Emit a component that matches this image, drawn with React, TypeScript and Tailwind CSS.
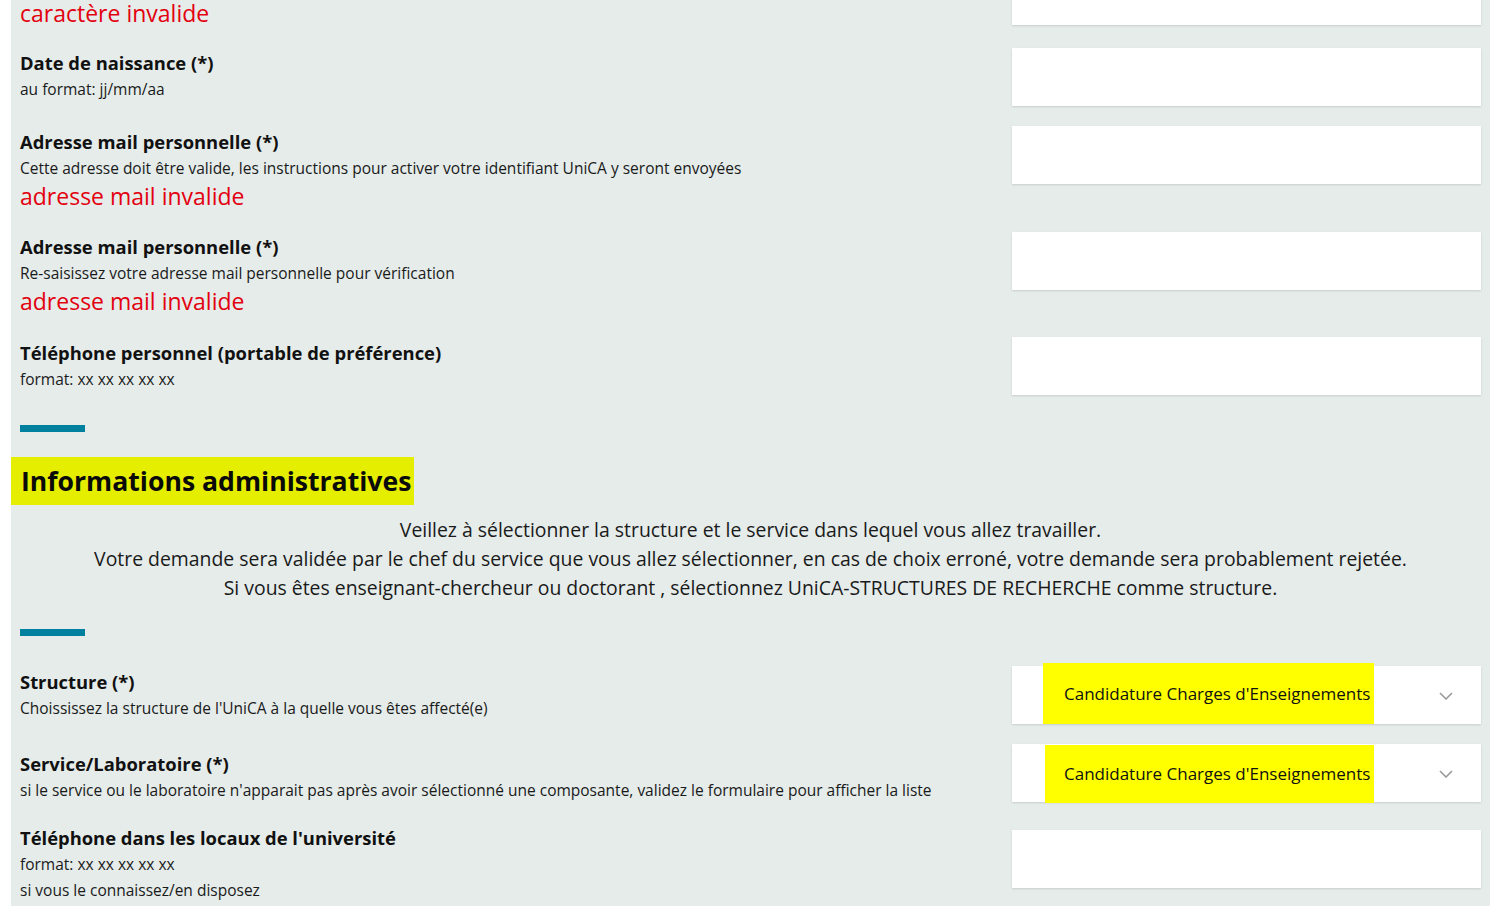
import { ReactNode } from "react";

const font = { fontFamily: "'Open Sans', 'Noto Sans', sans-serif" };

function Chevron() {
  return (
    <svg width="14" height="8" viewBox="0 0 14 8" fill="none">
      <polyline points="1,1 7,7 13,1" stroke="#9a9a9a" strokeWidth="1.6" />
    </svg>
  );
}

function Input({ className = "" }: { className?: string }) {
  return <div className={`h-[58px] w-[469px] shrink-0 bg-white shadow-[0_1px_2px_rgba(0,0,0,0.13)] ${className}`} />;
}

function Select({ value, className = "", hl = "" }: { value: string; className?: string; hl?: string }) {
  return (
    <div className={`relative flex h-[58px] w-[469px] shrink-0 items-center bg-white shadow-[0_1px_2px_rgba(0,0,0,0.13)] ${className}`}>
      <div className={`absolute left-[31px] flex w-[331px] items-center bg-[#ffff00] pl-[21px] text-[17px] text-[#111] ${hl}`}>
        {value}
      </div>
      <div className="absolute right-[28px] top-[26px]">
        <Chevron />
      </div>
    </div>
  );
}

function Row({ pt, label, subs = [], error, input }: {
  pt: string;
  label: string;
  subs?: string[];
  error?: string;
  input: ReactNode;
}) {
  return (
    <div className="mb-5 flex shrink-0 items-start justify-between">
      <div className={`flex flex-col ${pt}`}>
        <div className="text-[18.4px] font-bold leading-[26px] text-[#111]">{label}</div>
        {subs.map((s) => (
          <div key={s} className="text-[15.5px] leading-[26px] text-[#1a1a1a]">{s}</div>
        ))}
        {error && <div className="text-[23px] leading-[31px] text-[#e3000f]">{error}</div>}
      </div>
      {input}
    </div>
  );
}

export default function App() {
  return (
    <div className="h-[906px] overflow-hidden bg-white" style={font}>
      <div className="ml-[11px] mr-[17px] flex min-h-[906px] flex-col bg-[#e5ecea] px-[9px]">
        {/* previous field, scrolled mostly out of view */}
        <div className="-mt-[33px] mb-5 flex shrink-0 items-start justify-between">
          <div className="flex flex-col pt-[32px]">
            <div className="text-[23px] leading-[29px] text-[#e3000f]">caractère invalide</div>
          </div>
          <Input />
        </div>

        <Row pt="pt-[2px]" label="Date de naissance (*)" subs={["au format: jj/mm/aa"]} input={<Input />} />
        <Row
          pt="pt-[3px]"
          label="Adresse mail personnelle (*)"
          subs={["Cette adresse doit être valide, les instructions pour activer votre identifiant UniCA y seront envoyées"]}
          error="adresse mail invalide"
          input={<Input />}
        />
        <Row
          pt="pt-[2px]"
          label="Adresse mail personnelle (*)"
          subs={["Re-saisissez votre adresse mail personnelle pour vérification"]}
          error="adresse mail invalide"
          input={<Input />}
        />
        <Row pt="pt-[3px]" label="Téléphone personnel (portable de préférence)" subs={["format: xx xx xx xx xx"]} input={<Input />} />

        <div className="mt-[10px] h-[7px] w-[65px] shrink-0 bg-[#00809f]" />

        <div className="-ml-[9px] mt-[25px] flex h-[48px] shrink-0 items-center self-start bg-[#e6ee00] pl-[10px] pr-[3px]">
          <h2 className="text-[26.6px] font-bold leading-none text-[#0a0a0a]">Informations administratives</h2>
        </div>

        <div className="mt-[10px] shrink-0 text-center text-[19.4px] leading-[29px] text-[#1a1a1a]">
          <p>Veillez à sélectionner la structure et le service dans lequel vous allez travailler.</p>
          <p>Votre demande sera validée par le chef du service que vous allez sélectionner, en cas de choix erroné, votre demande sera probablement rejetée.</p>
          <p>Si vous êtes enseignant-chercheur ou doctorant , sélectionnez UniCA-STRUCTURES DE RECHERCHE comme structure.</p>
        </div>

        <div className="mt-[27px] h-[7px] w-[65px] shrink-0 bg-[#00809f]" />

        <div className="mt-[30px] shrink-0">
          <Row
            pt="pt-[3px]"
            label="Structure (*)"
            subs={["Choississez la structure de l'UniCA à la quelle vous êtes affecté(e)"]}
            input={<Select value="Candidature Charges d'Enseignements" hl="-top-[3px] h-[61px]" />}
          />
          <Row
            pt="pt-[7px]"
            label="Service/Laboratoire (*)"
            subs={["si le service ou le laboratoire n'apparait pas après avoir sélectionné une composante, validez le formulaire pour afficher la liste"]}
            input={<Select value="Candidature Charges d'Enseignements" hl="top-[1px] h-[58px] !left-[33px] !w-[329px] !pl-[19px]" />}
          />
          <Row
            pt="pt-[2px]"
            label="Téléphone dans les locaux de l'université"
            subs={["format: xx xx xx xx xx", "si vous le connaissez/en disposez"]}
            input={<Input className="mt-[7px]" />}
          />
        </div>
      </div>
    </div>
  );
}
